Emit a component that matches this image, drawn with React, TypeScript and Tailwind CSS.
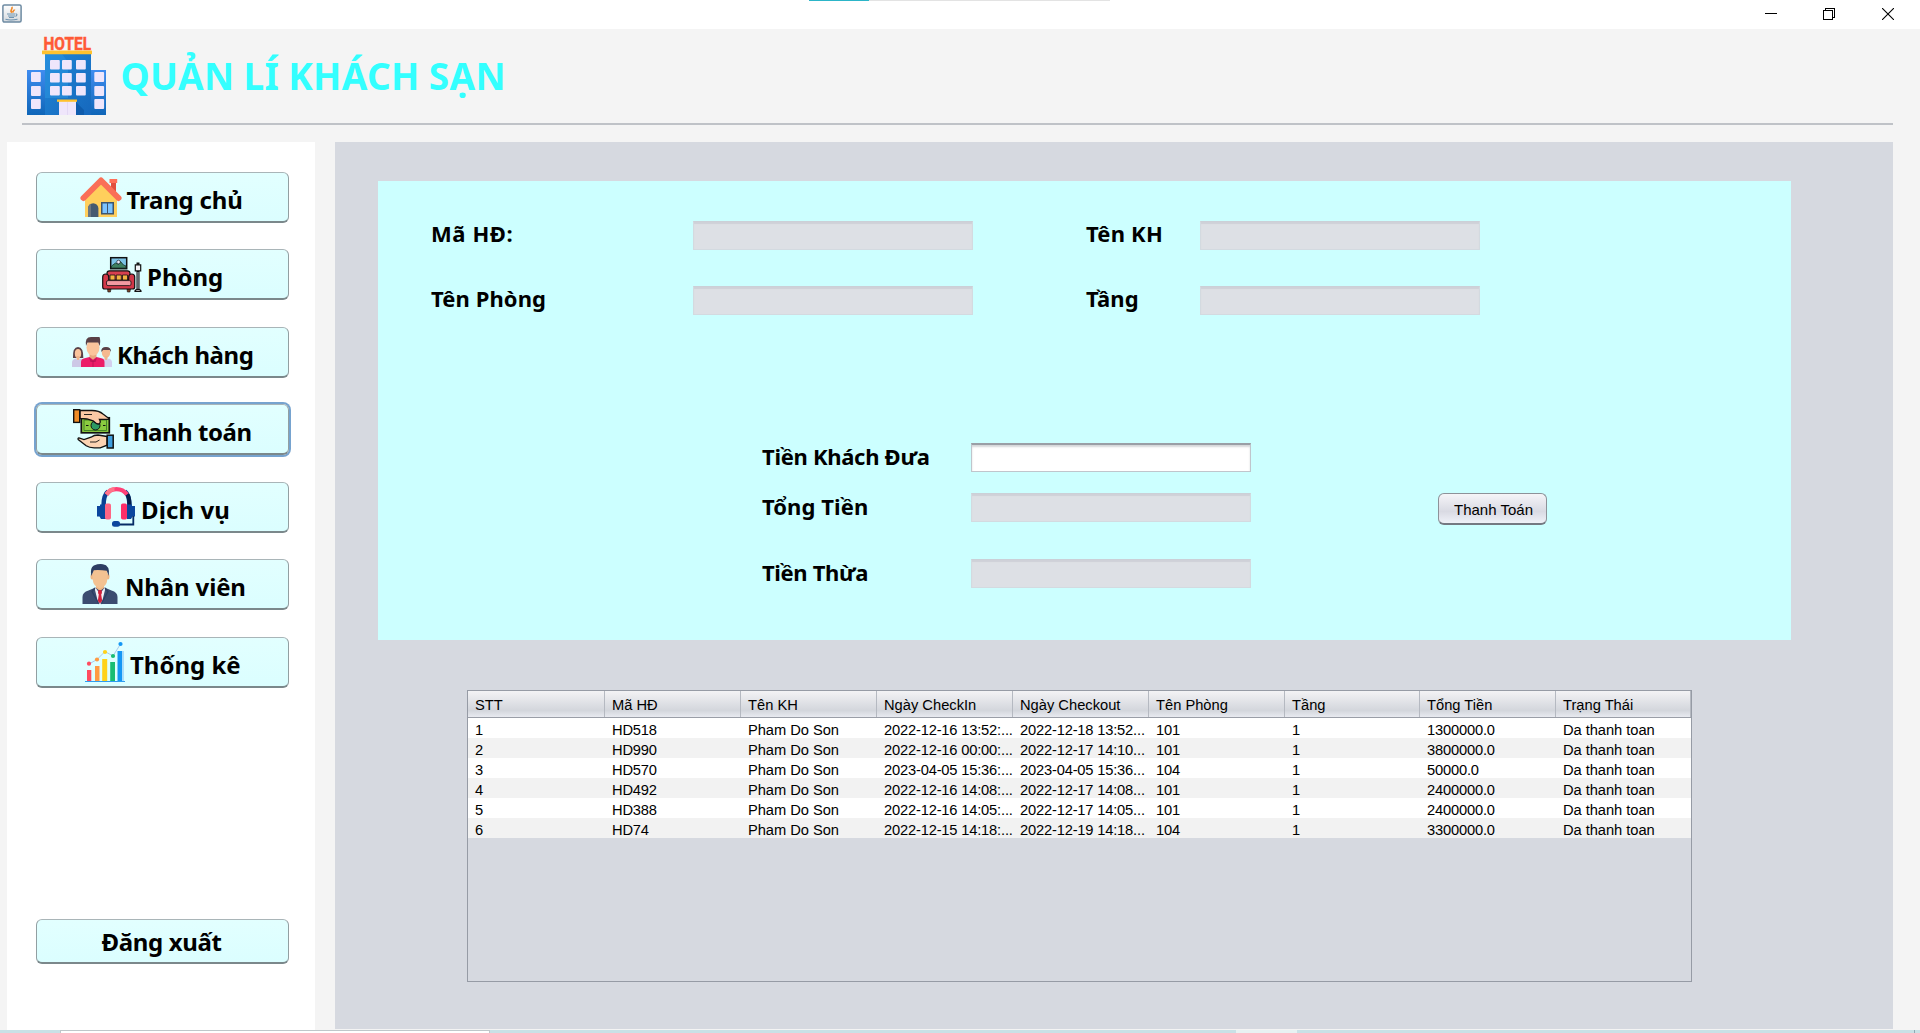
import React from 'react';

const HotelLogo = () => (
  <svg className="block h-[79px] w-[80px] shrink-0 overflow-visible" viewBox="27 37 80 79">
    <defs>
      <linearGradient id="tower" x1="0" y1="0" x2="1" y2="1">
        <stop offset="0" stopColor="#1f86d6" />
        <stop offset="1" stopColor="#1668bd" />
      </linearGradient>
      <linearGradient id="wing" x1="0" y1="0" x2="0" y2="1">
        <stop offset="0" stopColor="#3f8cf0" />
        <stop offset="1" stopColor="#0f66b8" />
      </linearGradient>
    </defs>
    <text x="43.500" y="50" fontFamily="Roboto, sans-serif" fontWeight="700" fontSize="18" textLength="47.500" lengthAdjust="spacingAndGlyphs" fill="#ff5a36" stroke="#ff5a36" strokeWidth=".5">HOTEL</text>
    <rect x="27" y="70" width="79" height="45" fill="url(#wing)" />
    <rect x="45" y="53" width="46" height="62" fill="url(#tower)" />
    <path d="M45 54h17l6 8v36H45z" fill="#2b93e0" opacity=".55" />
    <path d="M76 102l8 8v5h-8z" fill="#0f5cac" />
    <rect x="42" y="50.5" width="50" height="3.7" rx=".5" fill="#ffc22e" />
    {[60, 73, 86].map((y) =>
      [50, 62, 76].map((x) => <rect key={`${x}-${y}`} x={x} y={y} width="9.8" height="9.6" rx="1" fill="#efe6fb" />)
    )}
    {[72, 86, 99].map((y) =>
      [31, 94.3].map((x) => <rect key={`${x}-${y}`} x={x} y={y} width="9.8" height="10" rx="1" fill="#efe6fb" />)
    )}
    <rect x="59" y="101" width="17" height="14" fill="#efe6fb" />
    <path d="M67.500 102v13" stroke="#e0d4f2" strokeWidth=".8" />
    <rect x="57" y="99.500" width="20" height="2.300" fill="#ffc22e" />
  </svg>
);

const iconClass = 'absolute left-0 top-0 block h-full w-full overflow-visible';

const HomeIcon = () => (
  <svg className={iconClass} viewBox="81 177 40 40">
    <rect x="111" y="181" width="5" height="11" fill="#e04f3f" />
    <rect x="109.500" y="179" width="7.700" height="4" fill="#ff6f59" />
    <path d="M85 217V196l16-15 16 15v21z" fill="#ffcf5c" />
    <path d="M83.500 198L101 180.500 118.500 198" fill="none" stroke="#fa6f57" strokeWidth="6" strokeLinejoin="round" strokeLinecap="round" />
    <path d="M88 217v-8.500a5.200 5.200 0 0 1 10.400 0V217z" fill="#455a70" />
    <path d="M88 217v-8.500a5 5 0 0 1 3-4.800V217z" fill="#6c7680" />
    <rect x="101" y="202" width="13" height="12.500" fill="#3d566e" />
    <path d="M102.500 203.500h4.500v9.500h-4.500zM108 203.500h4.500v9.500H108z" fill="#7cc4ff" />
  </svg>
);

const RoomIcon = () => (
  <svg className={iconClass} viewBox="102 254 40 40">
    <rect x="110.700" y="257.700" width="16" height="11" fill="#7cc3e6" stroke="#111" strokeWidth="1.500" />
    <path d="M111.500 268v-2l4-3 3 1.500 2-3 3 3.500 2.500 1v2z" fill="#3f8060" stroke="#16332b" strokeWidth=".8" />
    <circle cx="118.500" cy="262" r="1.800" fill="#eef" stroke="#111" strokeWidth=".6" />
    <path d="M107.500 289h3.500l-.6 3h-2.500zM127 289h3.500l-.6 3h-2.500z" fill="#7a4528" stroke="#111" strokeWidth=".6" />
    <rect x="107" y="270.800" width="23" height="14" rx="2.500" fill="#d8404f" stroke="#111" strokeWidth="1.200" />
    <path d="M102.700 277q0-3 3-3t3 3v3h20v-3q0-3 3-3t3 3v10q0 2-2 2h-28q-2 0-2-2z" fill="#d23748" stroke="#111" strokeWidth="1.200" />
    <path d="M110 275h5v5h-5zM116.300 275h5v5h-5zM122.500 275h5v5h-5z" fill="#f5b342" stroke="#111" strokeWidth=".8" />
    <rect x="106.500" y="280.600" width="24.500" height="5" rx="1.500" fill="#f39aa2" stroke="#111" strokeWidth=".8" />
    <path d="M138 262.500v3M138 271v19" stroke="#111" strokeWidth="3" />
    <path d="M138 272v17" stroke="#9aa5ae" strokeWidth="1.200" />
    <path d="M135.300 264.800h5.400v6h-5.400zM135 291.300q0-2 3-2t3 2z" fill="#f2f2f6" stroke="#111" strokeWidth="1.200" />
  </svg>
);

const CustomersIcon = () => (
  <svg className={iconClass} viewBox="72 332 40 40">
    <path d="M73 358q-.5-11 5-11t5.300 11z" fill="#594046" />
    <ellipse cx="78" cy="353.500" rx="3.200" ry="4.500" fill="#fac49c" />
    <path d="M76.500 356h3v4h-3z" fill="#efb48b" />
    <path d="M72 367v-4.500q0-3 3.500-4l2.500 1.700 3-1.700q3 1 3 4v4.500z" fill="#cdc8e6" />
    <ellipse cx="106" cy="352.500" rx="4.200" ry="5.300" fill="#f5b98f" />
    <path d="M101.300 352q-.5-5 4.700-5t5 5l-1.300-2h-6.500z" fill="#594046" />
    <path d="M104.500 356h3v4h-3z" fill="#efb48b" />
    <path d="M100 367v-4.500q0-3 3.500-4l2.500 1.700 3-1.700q3 1 3 4v4.500z" fill="#d3cfee" />
    <path d="M89.500 352h7v9h-7z" fill="#e8a77e" />
    <path d="M81 367v-5q0-3 3.500-3.800l5-1.200 3.500 2.700 3.500-2.700 5 1.200q3 .8 3 3.800v5z" fill="#ec1c68" />
    <path d="M89 357.500l4 3 4-3-1.500 4.500H90.500z" fill="#c4145a" />
    <path d="M93 361v6" stroke="#b01052" strokeWidth=".7" />
    <ellipse cx="93" cy="347.500" rx="6.500" ry="8.300" fill="#fbc49b" />
    <path d="M86 346q-1.500-9 5-9h8.500q1.300 3 .2 9l-1.500-3.500h-10.700z" fill="#594046" />
  </svg>
);

const PaymentIcon = () => (
  <svg className={iconClass} viewBox="73 410 40 40">
    <rect x="81.300" y="418.800" width="28" height="15" fill="#8bcb3f" stroke="#111" strokeWidth="1.700" />
    <path d="M84 421h22.500v10.500H84z" fill="none" stroke="#3c7d25" strokeWidth=".9" />
    <circle cx="95.500" cy="426.500" r="4.500" fill="#2c9a63" stroke="#111" strokeWidth="1" />
    <path d="M86 426.500h2.500M103 426.500h2.500" stroke="#111" strokeWidth="1.200" />
    <path d="M80 411.500h12q7 0 11 3.500l6 4.500v.8H99.500q1.800 3-.5 4.500-2 1-6-3l-6-1.800-7-.5z" fill="#fcc9a5" stroke="#111" strokeWidth="1.300" />
    <path d="M84 415.500h8" stroke="#111" strokeWidth=".9" />
    <rect x="73.700" y="410.700" width="6" height="12.700" fill="#f08c26" stroke="#111" strokeWidth="1.400" />
    <path d="M107 437.500l-9-1.500q-4 0-7 2.200l-7 2.300-5-1.700q-1.500.3-.8 1.800l8 6.200q3 2 8 2h6l6.800-2.600z" fill="#fcd3b2" stroke="#111" strokeWidth="1.300" />
    <path d="M90 443h6l3.500-2" fill="none" stroke="#111" strokeWidth=".9" />
    <rect x="107.200" y="436.200" width="6" height="12.800" fill="#3f9ede" stroke="#111" strokeWidth="1.500" />
  </svg>
);

const ServiceIcon = () => (
  <svg className={iconClass} viewBox="96 487 40 40">
    <path d="M103.500 506q0-11 4.500-14.500M129.500 506q0-11-4.500-14.500" fill="none" stroke="#0a3f92" strokeWidth="4.500" />
    <path d="M127 494q2.500 3 2.500 12" fill="none" stroke="#061f4a" strokeWidth="4" />
    <path d="M106.500 494.500q3.500-5.300 10-5.300t10.500 5.300" fill="none" stroke="#ff4076" strokeWidth="4.300" />
    <path d="M106.500 494.500q3.500-5.300 8-5.300" fill="none" stroke="#ff7489" strokeWidth="4.300" />
    <path d="M97 506h3v-1.500h6V519h-5l-1.500-2.500H97zM135 506h-3v-1.500h-5V519h4l1.500-2.500h2.500z" fill="#0b469e" />
    <rect x="105" y="503.500" width="6" height="16" rx="1.800" fill="#ff6584" />
    <rect x="121" y="503.500" width="6" height="16" rx="1.800" fill="#ff2e68" />
    <path d="M133.300 516v8.500H119" fill="none" stroke="#062b66" strokeWidth="1.800" />
    <rect x="112" y="521" width="8" height="5.800" rx="2.500" fill="#0b469e" />
  </svg>
);

const StaffIcon = () => (
  <svg className={iconClass} viewBox="80 565 40 40">
    <path d="M82.500 605v-7q0-5 6-6.500l7-3h9l7 3q6 1.500 6 6.500v7z" fill="#3b4c70" />
    <path d="M95 588l5 7 5-7v3l-3.500 14h-3L95 591z" fill="#f2f2f7" />
    <path d="M96 583h8v6l-4 3-4-3z" fill="#eeb583" />
    <path d="M98.500 591h3l.5 3-.8 1.500 1 6.500-2.200 2.500-2.200-2.500 1-6.500-.8-1.500z" fill="#d4213d" />
    <path d="M95 589l-3 3.500 7 12.500M105 589l3 3.500-7 12.500" fill="none" stroke="#2c3e63" strokeWidth="1.200" />
    <ellipse cx="92" cy="577.500" rx="1.500" ry="3" fill="#eeb583" />
    <ellipse cx="108" cy="577.500" rx="1.500" ry="3" fill="#eeb583" />
    <path d="M92.500 570h15v10q-1 8-7.500 9.500-6.500-1.500-7.500-9.500z" fill="#f3c292" />
    <path d="M91.300 577q-1.500-8.500 2.500-10.500 5-2 9-1.300 7.500 1 6 11.800l-2-5.200q-6-1-13-.6z" fill="#2c3e63" />
  </svg>
);

const StatsIcon = () => (
  <svg className={iconClass} viewBox="85 642 40 40">
    <path d="M89 664l8-4.500 8-8 8 4.500 7.500-12" fill="none" stroke="#a9c9ec" strokeWidth="1" />
    <rect x="87" y="670" width="4.300" height="11" fill="#ff4b5f" />
    <rect x="95" y="666" width="4.500" height="15" fill="#ff9a42" />
    <rect x="102.200" y="659" width="5" height="22" fill="#ffd21a" />
    <rect x="110.200" y="662" width="4.800" height="19" fill="#18bd74" />
    <rect x="117.500" y="651" width="4.600" height="30" fill="#1497f5" />
    <rect x="122.100" y="651" width="1.800" height="30" fill="#a6dbfb" />
    <path d="M85 681.500h40" stroke="#2f9cf0" strokeWidth="1" />
    <circle cx="89" cy="663.700" r="2.100" fill="#ff4b5f" />
    <circle cx="97" cy="659.500" r="2.100" fill="#ff9a42" />
    <circle cx="105" cy="652" r="2.100" fill="#ffd21a" />
    <circle cx="113" cy="656" r="2.100" fill="#18bd74" />
    <circle cx="120.500" cy="644" r="2.100" fill="#1497f5" />
  </svg>
);

const menu = [
  { label: 'Trang chủ', Icon: HomeIcon, row: '', icon: 'ml-[44px]', text: 'ml-[5.5px] tracking-[-0.2px]' },
  { label: 'Phòng', Icon: RoomIcon, row: 'mt-[26px]', icon: 'ml-[65px]', text: 'ml-[5px]' },
  { label: 'Khách hàng', Icon: CustomersIcon, row: 'mt-[27px]', icon: 'ml-[35px]', text: 'ml-[5px] tracking-[-0.45px]' },
  { label: 'Thanh toán', Icon: PaymentIcon, row: 'mt-[26px] ring-2 ring-[#76a3cf] border-[#6f8794]', icon: 'ml-[36px]', text: 'ml-[6.5px] tracking-[-0.45px]' },
  { label: 'Dịch vụ', Icon: ServiceIcon, row: 'mt-[27px]', icon: 'ml-[59px]', text: 'ml-[5px] tracking-[0.1px]' },
  { label: 'Nhân viên', Icon: StaffIcon, row: 'mt-[26px]', icon: 'ml-[43px]', text: 'ml-[5px] tracking-[-0.15px]' },
  { label: 'Thống kê', Icon: StatsIcon, row: 'mt-[27px]', icon: 'ml-[48px]', text: 'ml-[5px]' },
];

const sideButton =
  "flex w-[253px] shrink-0 items-start rounded-[6px] border border-[#929fa2] border-t-[#a9b5b8] border-b-2 border-b-[#7b888b] bg-linear-to-b from-[#e2ffff] to-[#dbfeff] font-['Noto_Sans',sans-serif] text-[24px] leading-[24px] font-bold whitespace-nowrap text-black";

const Field = ({ enabled = false }: { enabled?: boolean }) => (
  <input
    readOnly
    className={
      enabled
        ? 'h-[29px] w-[280px] border border-[#c0c5cc] border-t-2 border-t-[#9a9fa6] bg-white shadow-[inset_0_2px_2px_#d5d7da] outline-none'
        : 'h-[29px] w-[280px] border border-[#d3dae0] border-t-[#cbd0d7] bg-[#dde0e5] shadow-[inset_0_2px_1px_#cfd1d8] outline-none'
    }
  />
);

const labelClass = "font-['Noto_Sans',sans-serif] text-[22px] leading-[22px] font-bold whitespace-nowrap text-black";

const columns = 'grid grid-cols-[137px_136px_136px_136px_136px_136px_135px_136px_135px]';
const headers = ['STT', 'Mã HĐ', 'Tên KH', 'Ngày CheckIn', 'Ngày Checkout', 'Tên Phòng', 'Tầng', 'Tổng Tiền', 'Trạng Thái'];
const rows = [
  ['1', 'HD518', 'Pham Do Son', '2022-12-16 13:52:...', '2022-12-18 13:52...', '101', '1', '1300000.0', 'Da thanh toan'],
  ['2', 'HD990', 'Pham Do Son', '2022-12-16 00:00:...', '2022-12-17 14:10...', '101', '1', '3800000.0', 'Da thanh toan'],
  ['3', 'HD570', 'Pham Do Son', '2023-04-05 15:36:...', '2023-04-05 15:36...', '104', '1', '50000.0', 'Da thanh toan'],
  ['4', 'HD492', 'Pham Do Son', '2022-12-16 14:08:...', '2022-12-17 14:08...', '101', '1', '2400000.0', 'Da thanh toan'],
  ['5', 'HD388', 'Pham Do Son', '2022-12-16 14:05:...', '2022-12-17 14:05...', '101', '1', '2400000.0', 'Da thanh toan'],
  ['6', 'HD74', 'Pham Do Son', '2022-12-15 14:18:...', '2022-12-19 14:18...', '104', '1', '3300000.0', 'Da thanh toan'],
];

export default function App() {
  return (
    <div className="flex h-[1033px] w-[1920px] flex-col overflow-hidden bg-[#f4f4f4]">
      <header className="relative flex h-[29px] shrink-0 items-start justify-between bg-white">
        <div className="absolute top-0 left-[809px] flex h-px w-[301px] bg-[#e3e3e3]">
          <div className="h-px w-[60px] bg-[#2cb5c8]" />
        </div>
        <svg className="mt-[4px] ml-[2px] block h-[19px] w-[20px]" viewBox="0 0 20 19">
          <defs>
            <linearGradient id="java" x1="0" y1="0" x2="0" y2="1">
              <stop offset="0" stopColor="#fff" />
              <stop offset="1" stopColor="#d3d8dd" />
            </linearGradient>
          </defs>
          <rect x=".9" y=".9" width="18.200" height="17.200" rx="1.500" fill="url(#java)" stroke="#6e8ba3" strokeWidth="1.500" />
          <path d="M10 8.500C7 6.500 11 5.500 10 2.800M11.500 8.500c-1.500-1.500 1-2 1-3" fill="none" stroke="#f08a2c" strokeWidth="1.600" />
          <path d="M5 10h8M6 12h7M7 13.500h5M3.500 15.300q5 1.500 12 0M13.500 9.700q3 .5 0 2.800" fill="none" stroke="#6f93b0" strokeWidth="1.100" />
        </svg>
        <div className="flex h-[29px] w-[171px] items-start pt-[8px]">
          <svg className="ml-[16px] block h-[12px] w-[12px]" viewBox="0 0 12 12" shapeRendering="crispEdges">
            <path d="M0 5.500h12" stroke="#000" />
          </svg>
          <svg className="ml-[46px] block h-[12px] w-[12px]" viewBox="0 0 12 12" shapeRendering="crispEdges">
            <path d="M.5 2.500h9v9h-9zM2.500 2.500v-2h9v9h-2" fill="none" stroke="#000" />
          </svg>
          <svg className="ml-[47px] block h-[12px] w-[12px]" viewBox="0 0 12 12">
            <path d="M0 0l12 12M12 0L0 12" stroke="#000" strokeWidth="1.100" />
          </svg>
        </div>
      </header>

      <div className="mr-[27px] ml-[22px] flex h-[96px] shrink-0 items-start border-b-2 border-[#bfc2c7]">
        <div className="mt-[8px] ml-[5px]">
          <HotelLogo />
        </div>
        <h1 className="mt-[29px] ml-[13.5px] font-['Noto_Sans',sans-serif] text-[37px] leading-[36px] font-bold tracking-[0.35px] whitespace-nowrap text-[#33ffff] [word-spacing:-1px]">
          QUẢN LÍ KHÁCH SẠN
        </h1>
      </div>

      <div className="mt-[17px] flex h-[887px] shrink-0 items-start pl-[7px]">
        <nav className="flex h-[888px] w-[308px] shrink-0 flex-col bg-white pt-[30px] pl-[29px]">
          {menu.map(({ label, Icon, row, icon, text }) => (
            <button key={label} className={`${sideButton} h-[51px] ${row}`}>
              <span className={`relative mt-[4px] h-[40px] w-[40px] shrink-0 ${icon}`}>
                <Icon />
              </span>
              <span className={`mt-[15px] ${text}`}>{label}</span>
            </button>
          ))}
          <button className={`${sideButton} mt-[231px] h-[45px]`}>
            <span className="mt-[10px] ml-[64.5px] tracking-[-0.35px]">Đăng xuất</span>
          </button>
        </nav>

        <main className="ml-[20px] flex h-[887px] w-[1558px] shrink-0 flex-col bg-[#d6d9e0]">
          <section className="mt-[39px] ml-[43px] flex h-[459px] w-[1413px] shrink-0 flex-col bg-[#ccffff]">
            <div className="mt-[40px] ml-[53px] grid grid-cols-[262px_393px_114px_280px] gap-y-[36px]">
              <span className={`${labelClass} mt-px tracking-[0.6px]`}>Mã HĐ:</span>
              <Field />
              <span className={`${labelClass} mt-px tracking-[0.2px]`}>Tên KH</span>
              <Field />
              <span className={`${labelClass} mt-px tracking-[0.1px]`}>Tên Phòng</span>
              <Field />
              <span className={`${labelClass} mt-px tracking-[0.1px]`}>Tầng</span>
              <Field />
            </div>
            <div className="mt-[128px] ml-[384px] flex items-start">
              <div className="grid grid-cols-[209px_280px] grid-rows-[50px_66px_29px]">
                <span className={`${labelClass} mt-[2px] tracking-[-0.3px]`}>Tiền Khách Đưa</span>
                <Field enabled />
                <span className={`${labelClass} mt-[2px] tracking-[0.1px]`}>Tổng Tiền</span>
                <Field />
                <span className={`${labelClass} mt-[2px] tracking-[-0.35px]`}>Tiền Thừa</span>
                <Field />
              </div>
              <button className="mt-[50px] ml-[187px] h-[32px] w-[109px] rounded-[6px] border border-[#8d9299] border-b-2 border-b-[#747982] bg-linear-to-b from-[#f5f5f8] via-[#d9dae3] via-60% to-[#eff1f8] pt-px pl-[2px] font-['Liberation_Sans',sans-serif] text-[15px] leading-[29px] whitespace-nowrap text-black">
                Thanh Toán
              </button>
            </div>
          </section>

          <section className="mt-[50px] ml-[132px] h-[292px] w-[1225px] shrink-0 border border-[#969ba5] font-['Liberation_Sans',sans-serif] text-[14.7px] text-black">
            <div className={`${columns} h-[27px] border-b border-[#9a9ea7] bg-linear-to-b from-[#f3f3f5] via-[#d3d6dc] via-75% to-[#e8eaf0] leading-[28px]`}>
              {headers.map((h) => (
                <span key={h} className="h-[26px] border-r border-[#b5b9c1] pl-[7px] whitespace-nowrap">
                  {h}
                </span>
              ))}
            </div>
            {rows.map((r) => (
              <div key={r[0]} className={`${columns} h-[20px] leading-[24px] even:bg-white odd:bg-[#f2f2f2]`}>
                {r.map((c, i) => (
                  <span key={i} className={i === 2 || i === 8 ? 'pl-[7px] tracking-[-0.05px] whitespace-nowrap' : 'pl-[7px] tracking-[-0.18px] whitespace-nowrap'}>
                    {c}
                  </span>
                ))}
              </div>
            ))}
          </section>
        </main>
      </div>

      <footer className="mt-px flex h-[3px] shrink-0 bg-[#c9e1e6]">
        <div className="ml-[60px] h-[3px] w-[430px] border border-b-0 border-[#bfc7ca] bg-white" />
        <div className="ml-[746px] h-[3px] w-[61px] bg-[#e8f2f2]" />
        <div className="ml-[617px] h-[3px] w-px bg-[#8fa9b3]" />
      </footer>
    </div>
  );
}
